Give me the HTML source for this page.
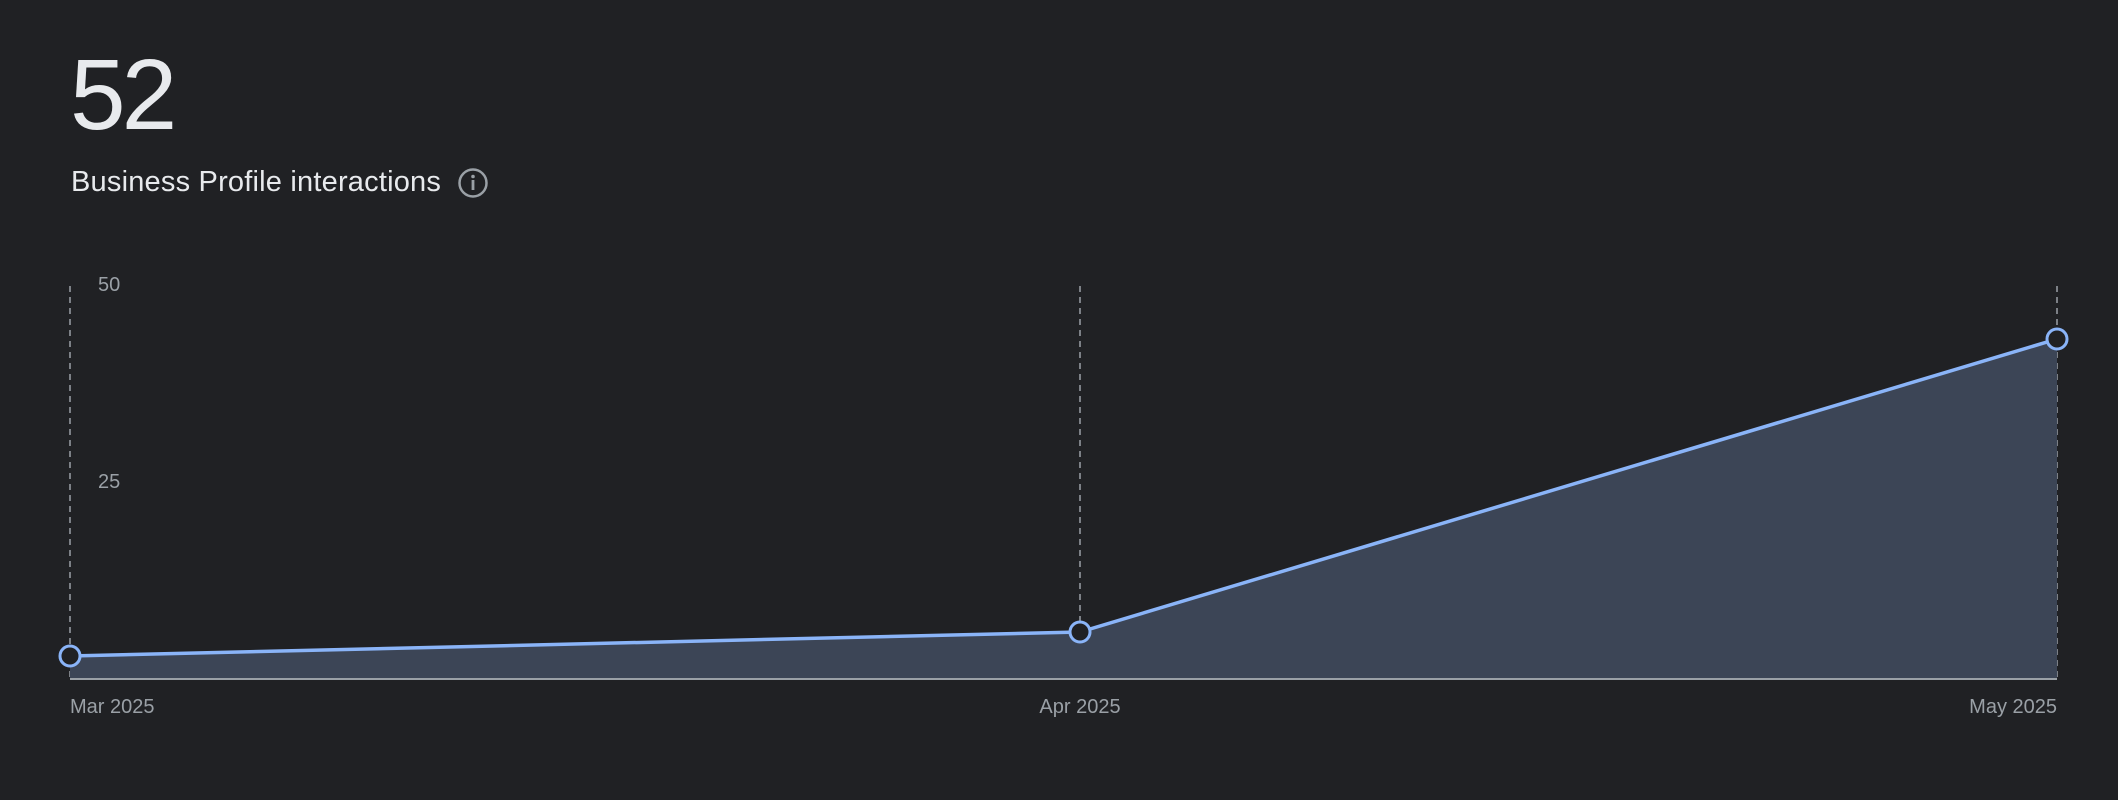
<!DOCTYPE html>
<html><head><meta charset="utf-8"><style>
html,body{margin:0;padding:0;background:#202124;width:2118px;height:800px;overflow:hidden;font-family:"Liberation Sans",sans-serif}
.big{position:absolute;left:70px;top:45px;font-size:100px;color:#e8eaed;line-height:1;letter-spacing:-4px}
.title{position:absolute;left:71px;top:168px;font-size:29px;color:#e8eaed;line-height:1;letter-spacing:0.2px}
</style></head><body>
<div class="big">52</div>
<div class="title">Business Profile interactions</div>
<svg width="2118" height="800" style="position:absolute;left:0;top:0">
<circle cx="473" cy="183" r="13.5" fill="none" stroke="#9aa0a6" stroke-width="2.5"/>
<circle cx="473" cy="176.5" r="1.8" fill="#9aa0a6"/>
<rect x="471.6" y="180" width="2.8" height="10" fill="#9aa0a6"/>
<g stroke="#9aa0a6" stroke-width="1.5" stroke-dasharray="6,5">
<line x1="70" y1="286" x2="70" y2="679"/>
<line x1="1080" y1="286" x2="1080" y2="679"/>
<line x1="2057" y1="286" x2="2057" y2="679"/>
</g>
<polygon points="70,656 1080,632 2057,339 2057,679 70,679" fill="#3c4556"/>
<line x1="70" y1="679" x2="2057" y2="679" stroke="#9aa0a6" stroke-width="2"/>
<polyline points="70,656 1080,632 2057,339" fill="none" stroke="#8ab4f8" stroke-width="3.5"/>
<g fill="#202124" stroke="#8ab4f8" stroke-width="3">
<circle cx="70" cy="656" r="10"/>
<circle cx="1080" cy="632" r="10"/>
<circle cx="2057" cy="339" r="10"/>
</g>
<g fill="#9aa0a6" font-family="Liberation Sans, sans-serif" font-size="20">
<text x="98" y="291">50</text>
<text x="98" y="488">25</text>
<text x="70" y="713">Mar 2025</text>
<text x="1080" y="713" text-anchor="middle">Apr 2025</text>
<text x="2057" y="713" text-anchor="end">May 2025</text>
</g>
</svg>
</body></html>
